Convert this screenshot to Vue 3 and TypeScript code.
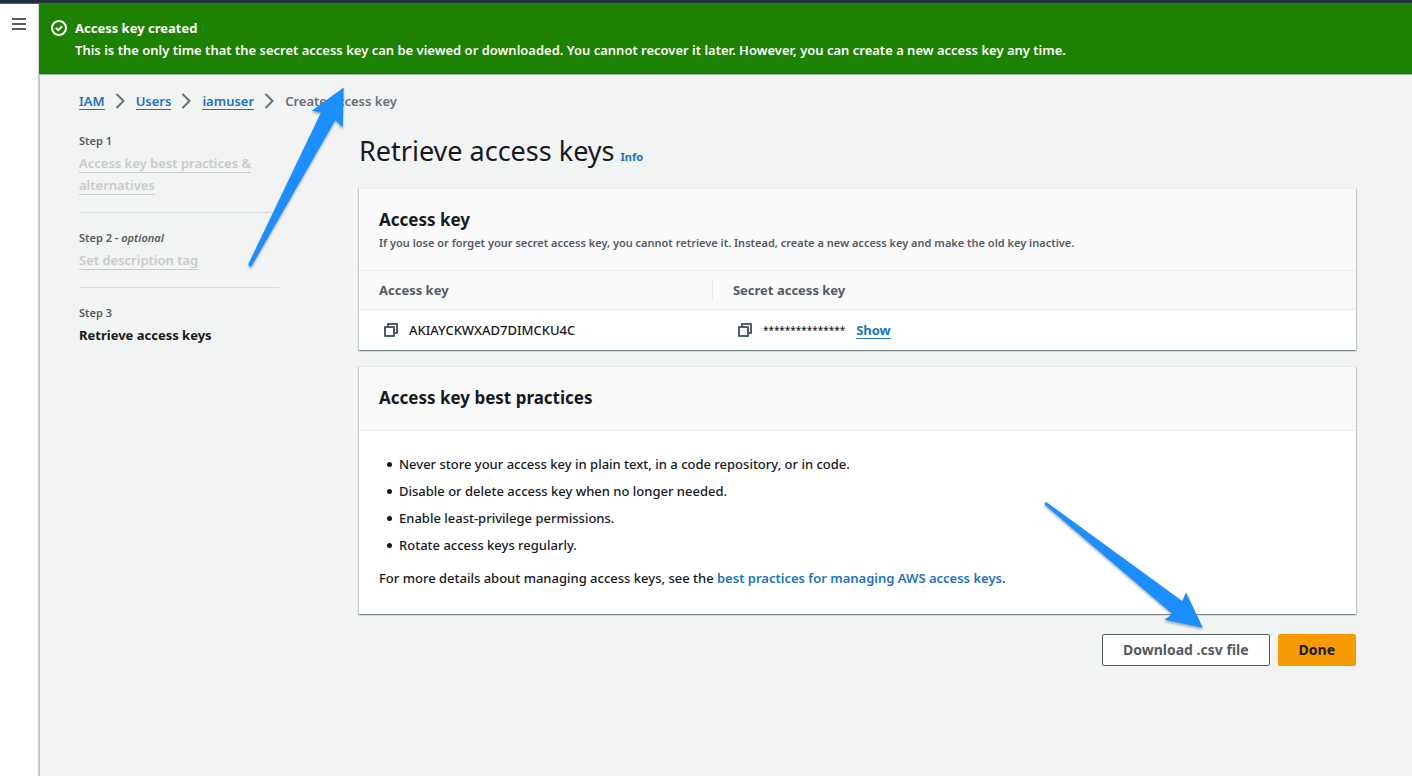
<script setup lang="ts">
interface Crumb {
  label: string
  href: string
}

interface Step {
  label: string
  optional?: boolean
  title: string
  current?: boolean
}

const crumbs: Crumb[] = [
  { label: 'IAM', href: '#iam' },
  { label: 'Users', href: '#users' },
  { label: 'iamuser', href: '#iamuser' },
]

const steps: Step[] = [
  { label: 'Step 1', title: 'Access key best practices & alternatives' },
  { label: 'Step 2', optional: true, title: 'Set description tag' },
  { label: 'Step 3', title: 'Retrieve access keys', current: true },
]

const practices: string[] = [
  'Never store your access key in plain text, in a code repository, or in code.',
  'Disable or delete access key when no longer needed.',
  'Enable least-privilege permissions.',
  'Rotate access keys regularly.',
]
</script>

<template>
  <div class="console">
    <div class="topbar"></div>
    <div class="shell">
      <aside class="rail">
        <button class="icon-button menu" type="button" aria-label="Open navigation">
          <svg width="14" height="12" viewBox="0 0 14 12">
            <path d="M0 1h14M0 6h14M0 11h14" stroke="#545b64" stroke-width="2" />
          </svg>
        </button>
      </aside>

      <main class="page">
        <section class="flash" role="status">
          <svg class="flash-icon" width="16" height="16" viewBox="0 0 16 16" fill="none" stroke="#fff" stroke-width="2">
            <circle cx="8" cy="8" r="7" />
            <path d="M4.8 7.8l2.4 2.4 4-4" />
          </svg>
          <div>
            <strong class="flash-title">Access key created</strong>
            <p class="flash-text">
              This is the only time that the secret access key can be viewed or downloaded. You cannot recover it later. However, you can create a new access key any time.
            </p>
          </div>
        </section>

        <div class="content">
          <nav class="crumbs" aria-label="Breadcrumbs">
            <template v-for="crumb in crumbs" :key="crumb.label">
              <a class="link underlined" :href="crumb.href">{{ crumb.label }}</a>
              <svg class="chevron" width="10" height="16" viewBox="0 0 10 16" fill="none" stroke="#687078" stroke-width="2">
                <path d="M1.5 1l7 7-7 7" />
              </svg>
            </template>
            <span class="crumb-current">Create access key</span>
          </nav>

          <div class="wizard">
            <ol class="steps">
              <li v-for="step in steps" :key="step.label" class="step">
                <div class="step-label">
                  {{ step.label }}<template v-if="step.optional"> - <i>optional</i></template>
                </div>
                <span :class="step.current ? 'step-current' : 'step-disabled'">{{ step.title }}</span>
              </li>
            </ol>

            <div class="body">
              <header class="heading">
                <h1>Retrieve access keys</h1>
                <a class="info" href="#info">Info</a>
              </header>

              <section class="card">
                <div class="card-header">
                  <h2>Access key</h2>
                  <p class="description">
                    If you lose or forget your secret access key, you cannot retrieve it. Instead, create a new access key and make the old key inactive.
                  </p>
                </div>
                <table class="keys">
                  <thead>
                    <tr>
                      <th class="key-column" scope="col"><div class="th-text divided">Access key</div></th>
                      <th scope="col"><div class="th-text">Secret access key</div></th>
                    </tr>
                  </thead>
                  <tbody>
                    <tr>
                      <td>
                        <div class="cell">
                          <button class="icon-button" type="button" aria-label="Copy access key">
                            <svg width="14" height="14" viewBox="0 0 14 14" fill="none" stroke="#545b64" stroke-width="2" stroke-linejoin="round">
                              <path d="M1 4h9v9H1zM4 4V1h9v9h-3" />
                            </svg>
                          </button>
                          <span>AKIAYCKWXAD7DIMCKU4C</span>
                        </div>
                      </td>
                      <td>
                        <div class="cell">
                          <button class="icon-button" type="button" aria-label="Copy secret access key">
                            <svg width="14" height="14" viewBox="0 0 14 14" fill="none" stroke="#545b64" stroke-width="2" stroke-linejoin="round">
                              <path d="M1 4h9v9H1zM4 4V1h9v9h-3" />
                            </svg>
                          </button>
                          <span class="secret">***************</span>
                          <a class="link underlined show" href="#show">Show</a>
                        </div>
                      </td>
                    </tr>
                  </tbody>
                </table>
              </section>

              <section class="card">
                <div class="card-header simple">
                  <h2>Access key best practices</h2>
                </div>
                <div class="card-body">
                  <ul class="practices">
                    <li v-for="practice in practices" :key="practice">{{ practice }}</li>
                  </ul>
                  <p class="more">
                    For more details about managing access keys, see the
                    <a class="link" href="#best-practices">best practices for managing AWS access keys</a>.
                  </p>
                </div>
              </section>

              <footer class="actions">
                <button class="button" type="button">Download .csv file</button>
                <button class="button primary" type="button">Done</button>
              </footer>
            </div>
          </div>
        </div>
      </main>
    </div>

    <svg class="arrows" width="1412" height="776" viewBox="0 0 1412 776" aria-hidden="true">
      <path d="M343.7 87.5L311.7 110.8L321 112.4L248.4 264Q248.5 267.5 251.5 266.2L335.4 120L342.8 127.4Z" />
      <path d="M1202.8 627.8L1186 592.3L1182.3 601L1047 502.4Q1043.5 501.5 1045 505L1172.4 614L1164.3 619.8Z" />
    </svg>
  </div>
</template>

<style>
body {
  margin: 0;
  background: #f2f3f3;
}
</style>

<style scoped>
.console {
  position: relative;
  display: flex;
  flex-direction: column;
  min-height: 100vh;
  overflow: hidden;
  color: #16191f;
  background: #f2f3f3;
  font-family: "Noto Sans", "Open Sans", sans-serif;
  font-size: 13px;
  font-weight: 500;
  line-height: 22px;
}

.topbar {
  height: 3px;
  background: #232f3e;
  border-bottom: 1px solid #545b64;
}

.shell {
  display: flex;
  flex: 1;
}

.rail {
  width: 39px;
  padding-top: 14px;
  background: #fff;
}

.icon-button {
  padding: 0;
  border: 0;
  background: none;
  line-height: 0;
  cursor: pointer;
}

.menu {
  display: block;
  margin: 0 auto 0 12px;
}

.page {
  flex: 1;
  min-width: 0;
  box-shadow: -1px 0 1px rgba(0, 28, 36, 0.2), inset 1px 0 0 #c4c8c9;
}

.flash {
  display: flex;
  gap: 8px;
  padding: 13px 12px;
  color: #fff;
  background: #1d8102;
  border-bottom: 1px solid #a5afaa;
}

.flash-icon {
  flex: none;
  margin-top: 3px;
}

.flash-title {
  display: block;
}

.flash-text {
  margin: 0;
  font-weight: 600;
}

.content {
  padding: 15px 56px 40px 40px;
}

.crumbs {
  display: flex;
  align-items: center;
}

.chevron {
  margin: 0 11px 0 10px;
}

.link {
  color: #2074bf;
  font-weight: 600;
  text-decoration: none;
}

.underlined {
  line-height: 16px;
  border-bottom: 1px solid #2074bf;
}

.crumb-current {
  color: #687078;
  font-weight: 600;
}

.wizard {
  display: flex;
  gap: 80px;
  margin-top: 18px;
}

.steps {
  flex: none;
  width: 200px;
  margin: 0;
  padding: 0;
  list-style: none;
}

.step {
  padding-bottom: 16px;
}

.step + .step {
  padding-top: 14px;
  border-top: 1px solid #d5dbdb;
}

.step-label {
  color: #545b64;
  font-size: 11px;
  font-weight: 600;
}

.step-disabled {
  color: #c9cccc;
  border-bottom: 1px solid #c9cccc;
  font-weight: 600;
}

.step-current {
  font-weight: 700;
}

.body {
  flex: 1;
  min-width: 0;
}

.heading {
  display: flex;
  align-items: baseline;
  gap: 6px;
  margin: 3px 0 19px;
}

h1 {
  margin: 0;
  font-size: 27px;
  font-weight: 400;
  line-height: 36px;
}

.info {
  color: #2074bf;
  font-size: 11px;
  font-weight: 700;
  text-decoration: none;
}

.card {
  margin-bottom: 16px;
  background: #fff;
  border-top: 1px solid #eaeded;
  box-shadow: 0 1px 1px 0 rgba(0, 28, 36, 0.3), 1px 1px 1px 0 rgba(0, 28, 36, 0.15), -1px 1px 1px 0 rgba(0, 28, 36, 0.15);
}

.card-header {
  padding: 19px 20px 18px;
  background: #fafafa;
  border-bottom: 1px solid #eaeded;
}

.simple {
  padding: 19px 20px 20px;
}

h2 {
  margin: 0;
  font-size: 17px;
  font-weight: 700;
  line-height: 24px;
}

.description {
  margin: 2px 0 0;
  color: #545b64;
  font-size: 11px;
  font-weight: 600;
  line-height: 18px;
}

.keys {
  width: 100%;
  border-collapse: collapse;
  table-layout: fixed;
}

.key-column {
  width: 35.5%;
}

th {
  padding: 8px 0;
  color: #545b64;
  background: #fafafa;
  border-bottom: 1px solid #eaeded;
  font-weight: 700;
  text-align: left;
}

.th-text {
  padding-left: 20px;
}

.divided {
  border-right: 1px solid #eaeded;
}

td {
  padding: 9px 25px;
}

.cell {
  display: flex;
  align-items: center;
  gap: 11px;
}

.secret {
  font-size: 10px;
}

.show {
  font-weight: 700;
}

.card-body {
  padding: 22px 20px 25px;
}

.practices {
  margin: 0;
  padding: 0;
  list-style: none;
}

.practices li {
  display: flex;
  align-items: center;
  margin-bottom: 5px;
}

.practices li::before {
  content: "";
  flex: none;
  width: 5px;
  height: 5px;
  margin: 1px 7px 0 8px;
  border-radius: 50%;
  background: #16191f;
}

.more {
  margin: 11px 0 0;
}

.actions {
  display: flex;
  justify-content: flex-end;
  gap: 8px;
  margin-top: 20px;
}

.button {
  height: 32px;
  padding: 0 20px;
  color: #545b64;
  background: #fff;
  border: 1px solid #545b64;
  border-radius: 2px;
  font: inherit;
  font-size: 14px;
  font-weight: 700;
  cursor: pointer;
}

.primary {
  color: #16191f;
  background: #f89a02;
  border-color: #f89a02;
}

.arrows {
  position: absolute;
  top: 0;
  left: 0;
  fill: #1b8fff;
  filter: drop-shadow(0 2px 1px rgba(0, 0, 0, 0.3));
  pointer-events: none;
}
</style>
